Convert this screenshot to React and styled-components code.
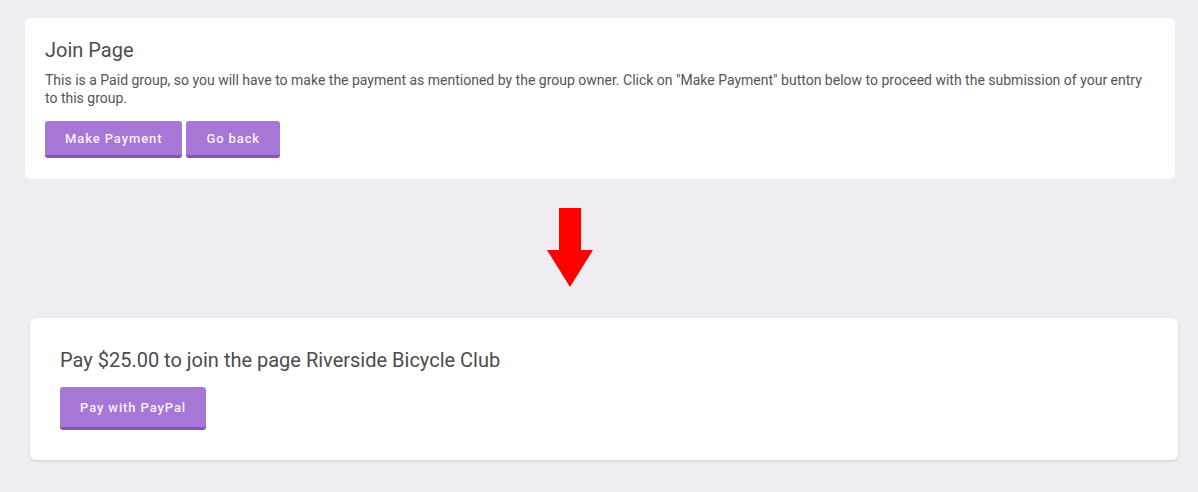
import React from "react";
import styled, { createGlobalStyle } from "styled-components";

const Global = createGlobalStyle`
  html, body { margin: 0; padding: 0; background: #efedf2; }
  body { font-family: Roboto, "Noto Sans", Arial, sans-serif; }
`;

const Page = styled.div`
  display: flex;
  flex-direction: column;
  padding: 18px 20px 32px 25px;
  box-sizing: border-box;
  width: 1198px;
  min-height: 492px;
`;

const Card = styled.section`
  background: #fff;
  border-radius: 6px;
  box-sizing: border-box;
  width: ${(p) => p.$width}px;
  margin-left: ${(p) => p.$offset || 0}px;
  padding: ${(p) => p.$padding};
  box-shadow: ${(p) => (p.$shadow ? "0 1px 3px rgba(0,0,0,0.14)" : "none")};
`;

const Title = styled.h2`
  margin: 0;
  font-size: 20px;
  line-height: 24px;
  font-weight: 400;
  color: #4c4c4c;
`;

const Text = styled.p`
  margin: 9px 0 14px;
  font-size: 14px;
  line-height: 18px;
  color: #555;
`;

const Row = styled.div`
  display: flex;
  gap: 4px;
  margin-top: ${(p) => p.$top || 0}px;
`;

const Button = styled.button`
  height: ${(p) => p.$h}px;
  padding: 0 20px;
  border: none;
  border-bottom: 3px solid #8556b2;
  border-radius: 3px;
  background: #a777d5;
  color: #f7f0fc;
  font-family: Roboto, Arial, sans-serif;
  font-size: 13px;
  font-weight: 500;
  letter-spacing: 0.9px;
  cursor: pointer;
  box-sizing: border-box;
`;

const ArrowWrap = styled.div`
  display: flex;
  padding: 29px 0 31px 522px;
`;

export default function App() {
  return (
    <>
      <Global />
      <Page>
        <Card $width={1150} $padding="20px 20px 21px">
          <Title>Join Page</Title>
          <Text>
            This is a Paid group, so you will have to make the payment as mentioned by the group owner. Click on "Make Payment" button below to proceed with the submission of your entry to this group.
          </Text>
          <Row>
            <Button $h={37}>Make Payment</Button>
            <Button $h={37}>Go back</Button>
          </Row>
        </Card>
        <ArrowWrap>
          <svg width="46" height="79" viewBox="0 0 46 79">
            <polygon points="12,0 34,0 34,42 46,42 23,79 0,42 12,42" fill="#ff0000" />
          </svg>
        </ArrowWrap>
        <Card $width={1148} $offset={5} $padding="30px 30px 30px" $shadow>
          <Title>Pay $25.00 to join the page Riverside Bicycle Club</Title>
          <Row $top={15}>
            <Button $h={43}>Pay with PayPal</Button>
          </Row>
        </Card>
      </Page>
    </>
  );
}
